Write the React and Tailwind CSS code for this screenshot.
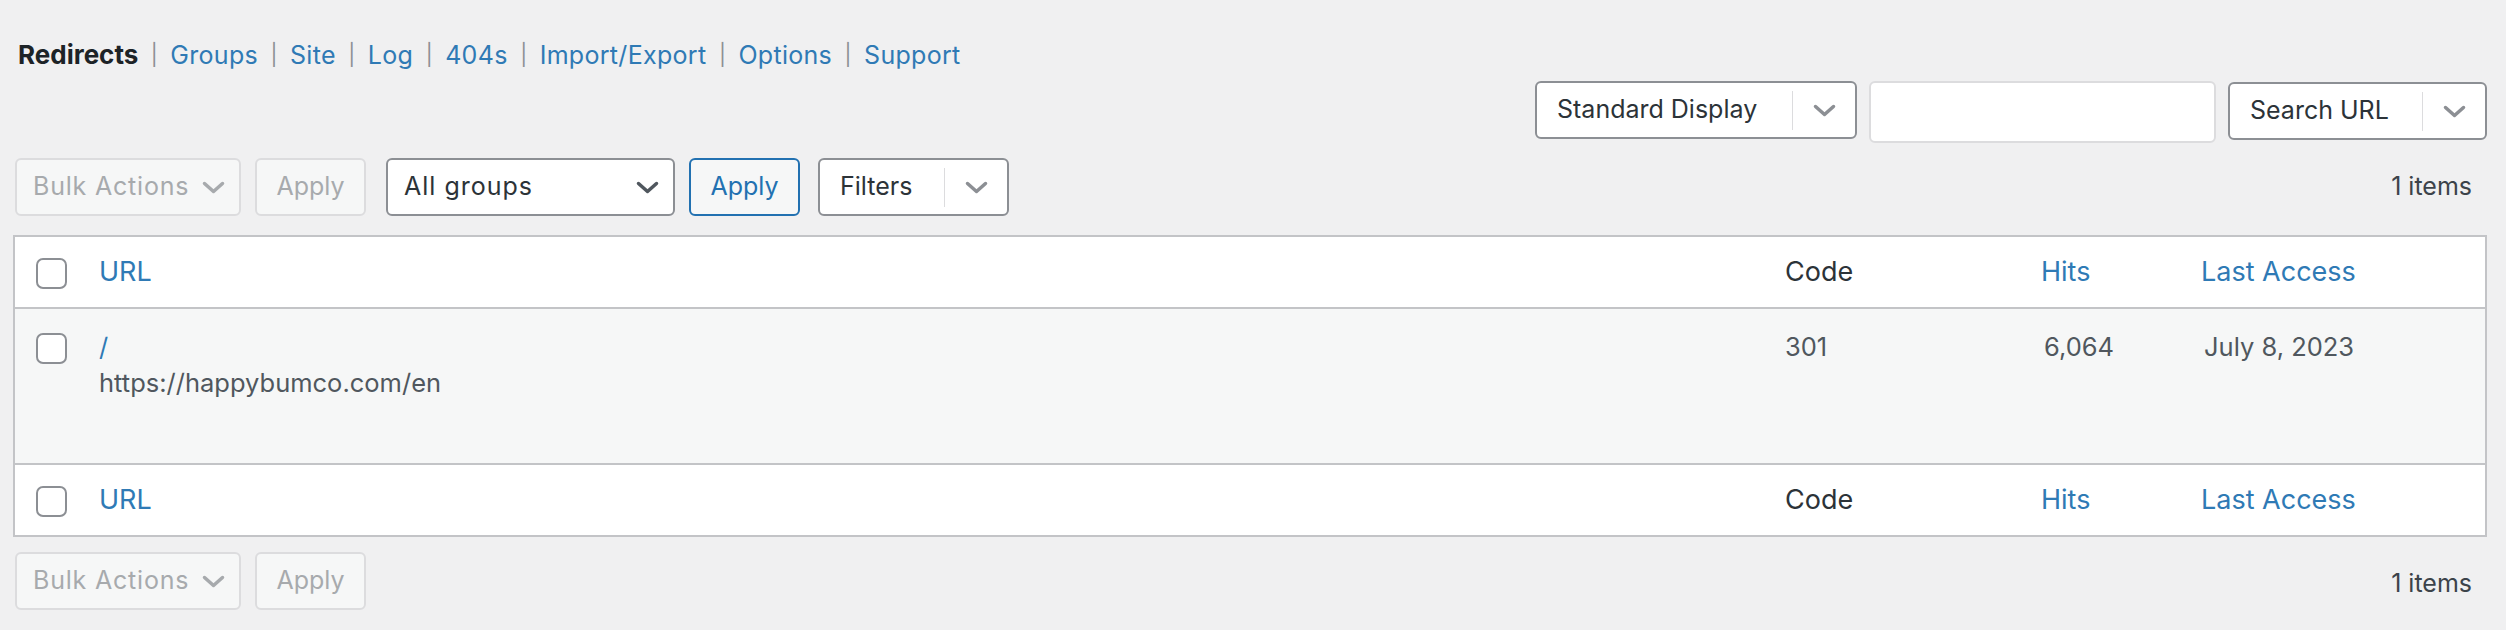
import React from 'react';

const Chevron = ({ className }) => (
  <svg viewBox="0 0 23 13" className={className} fill="none" stroke="currentColor" strokeWidth="3.5" strokeLinecap="round" strokeLinejoin="round">
    <path d="M2.5 2.5 11.5 10.5 20.5 2.5" />
  </svg>
);

const Checkbox = () => (
  <span className="block w-[31px] h-[31px] rounded-[7px] border-2 border-[#8c8f94] bg-white" />
);

const navItems = ['Groups', 'Site', 'Log', '404s', 'Import/Export', 'Options', 'Support'];

function SplitSelect({ label, width }) {
  return (
    <div className={`flex items-center h-[58px] ${width} rounded-[6px] border-2 border-[#8c8f94] bg-white`}>
      <span className="flex-1 pl-[20px] text-[25px] text-[#2c3338] whitespace-nowrap">{label}</span>
      <span className="w-px h-[39px] bg-[#dcdcde]" />
      <span className="w-[62px] flex justify-center">
        <Chevron className="w-[23px] h-[13px] text-[#8c8f94]" />
      </span>
    </div>
  );
}

function BulkBar() {
  return (
    <div className="flex items-center gap-[14px] ml-[2px]">
      <div className="flex items-center justify-between w-[226px] h-[58px] rounded-[6px] border-2 border-[#dcdcde] bg-[#f6f7f7] pl-[16px] pr-[14px] text-[25px] text-[#a7aaad]">
        <span className="tracking-[0.8px]">Bulk Actions</span>
        <Chevron className="w-[23px] h-[13px] text-[#a7aaad]" />
      </div>
      <div className="flex items-center justify-center w-[111px] h-[58px] rounded-[6px] border-2 border-[#dcdcde] bg-[#f6f7f7] text-[25px] text-[#a7aaad]">
        Apply
      </div>
    </div>
  );
}

function HeadRow() {
  return (
    <div className="grid grid-cols-[84px_1fr_256px_160px_284px] items-center h-[70px] bg-white text-[27px]">
      <div className="pl-[21px] pt-[3px]"><Checkbox /></div>
      <div className="text-[#2f7ab5]">URL</div>
      <div className="text-[#2c3338]">Code</div>
      <div className="text-[#2f7ab5]">Hits</div>
      <div className="text-[#2f7ab5]">Last Access</div>
    </div>
  );
}

export default function App() {
  return (
    <div className="w-[2506px] h-[630px] bg-[#f0f0f1] pl-[13px] pr-[19px] font-['Inter',sans-serif] overflow-hidden">
      {/* sub nav */}
      <div className="flex items-center pt-[37px] pl-[5px] h-[73px] text-[25px] leading-[36px]">
        <span className="font-bold text-[26px] text-[#1d2327]">Redirects</span>
        {navItems.map(item => (
          <React.Fragment key={item}>
            <span className="px-[12.5px] text-[21px] text-[#8c8f94]">|</span>
            <span className="text-[#2f7ab5] tracking-[0.3px]">{item}</span>
          </React.Fragment>
        ))}
      </div>

      {/* display / search */}
      <div className="flex justify-end items-start gap-[12px] mt-[8px] h-[62px]">
        <SplitSelect label="Standard Display" width="w-[322px]" />
        <div className="w-[347px] h-[62px] rounded-[6px] border-2 border-[#dcdcde] bg-white" />
        <div className="mt-[1px]">
          <SplitSelect label="Search URL" width="w-[259px]" />
        </div>
      </div>

      {/* top tablenav */}
      <div className="flex items-center justify-between mt-[15px] h-[58px]">
        <div className="flex items-center">
          <BulkBar />
          <div className="flex items-center justify-between w-[289px] h-[58px] ml-[20px] rounded-[6px] border-2 border-[#8c8f94] bg-white pl-[16px] pr-[14px] text-[25px] text-[#2c3338]">
            <span className="tracking-[1px]">All groups</span>
            <Chevron className="w-[23px] h-[13px] text-[#50575e]" />
          </div>
          <div className="flex items-center justify-center w-[111px] h-[58px] ml-[14px] rounded-[6px] border-2 border-[#2271b1] bg-[#f6f7f7] text-[25px] text-[#2271b1]">
            Apply
          </div>
          <div className="ml-[18px]">
            <SplitSelect label="Filters" width="w-[191px]" />
          </div>
        </div>
        <span className="pr-[15px] text-[25px] text-[#3c434a]">1 items</span>
      </div>

      {/* table */}
      <div className="mt-[19px] border-2 border-[#c3c4c7]">
        <HeadRow />
        <div className="grid grid-cols-[84px_1fr_256px_160px_284px] h-[158px] border-y-2 border-[#c3c4c7] bg-[#f6f7f7] pt-[22px] text-[25.5px] leading-[36px] text-[#50575e]">
          <div className="pl-[21px] pt-[2px]"><Checkbox /></div>
          <div className="-mt-[2px]">
            <div className="text-[#2f7ab5]">/</div>
            <div>https://happybumco.com/en</div>
          </div>
          <div className="-mt-[2px]">301</div>
          <div className="-mt-[2px] pl-[3px]">6,064</div>
          <div className="-mt-[2px] pl-[3px]">July 8, 2023</div>
        </div>
        <HeadRow />
      </div>

      {/* bottom tablenav */}
      <div className="flex items-center justify-between mt-[15px] h-[58px]">
        <BulkBar />
        <span className="pr-[15px] pt-[6px] text-[25px] text-[#3c434a]">1 items</span>
      </div>
    </div>
  );
}
